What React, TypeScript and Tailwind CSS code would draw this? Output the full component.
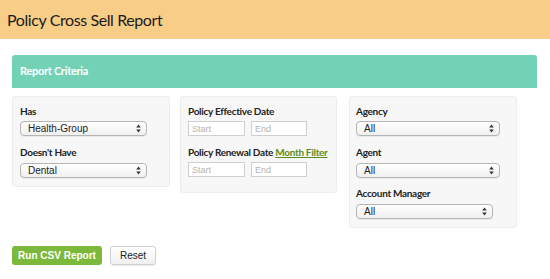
import React from "react";

const labelCls =
   "block whitespace-nowrap text-[10px] leading-[14px] tracking-[-0.3px] font-bold text-[#222] font-['Lato','Noto_Sans',sans-serif]";

const SelectBox = ({ value, width }: { value: string; width: string }) => (
   <div
      className={`relative flex h-[15px] items-center rounded-[4px] border border-[#b5b5b5] bg-gradient-to-b from-white to-[#f0f0f0] pl-[7px] shadow-[0_1px_0_rgba(0,0,0,0.05)] ${width}`}
   >
      <span className="text-[10px] leading-none text-[#222] font-['Liberation_Sans',Arial,sans-serif]">
         {value}
      </span>
      <svg
         className="pointer-events-none absolute right-[5px] top-[2px]"
         width="5"
         height="9"
         viewBox="0 0 5 9"
      >
         <path d="M2.5 0.5 L4.8 3.6 H0.2 Z" fill="#333" />
         <path d="M2.5 8.5 L4.8 5.4 H0.2 Z" fill="#333" />
      </svg>
   </div>
);

const DateInput = ({ placeholder, width }: { placeholder: string; width: string }) => (
   <input
      placeholder={placeholder}
      className={`h-[15px] ${width} border border-[#cfcfcf] bg-white px-[3px] text-[9px] text-[#333] placeholder:text-[#b3b3b3] font-['Liberation_Sans',Arial,sans-serif] outline-none`}
   />
);

export default function App() {
   return (
      <div className="min-h-[279px] w-[550px] bg-white">
         {/* Page header */}
         <div className="flex h-[39px] items-center bg-[#f8cd87] px-[7px]">
            <h1 className="text-[16px] leading-none tracking-[-0.4px] text-[#1a1a1a] font-['Lato','Noto_Sans',sans-serif]">
               Policy Cross Sell Report
            </h1>
         </div>

         <div className="ml-[12px] w-[525px] pt-[16px]">
            {/* Criteria bar */}
            <div className="flex h-[33px] items-center rounded-t-[3px] bg-[#73d2b6] px-[8px]">
               <span className="text-[11px] font-bold tracking-[-0.3px] text-white font-['Lato','Noto_Sans',sans-serif]">
                  Report Criteria
               </span>
            </div>

            <div className="mt-[8px] flex items-start">
               {/* Has / Doesn't have */}
               <div className="w-[158px] rounded-[3px] border border-[#ededed] bg-[#f7f7f7] px-[7px] pb-[8px] pt-[7px]">
                  <span className={labelCls}>Has</span>
                  <div className="mt-[3px]">
                     <SelectBox value="Health-Group" width="w-[127px]" />
                  </div>
                  <span className={`${labelCls} mt-[9px]`}>Doesn't Have</span>
                  <div className="mt-[4px]">
                     <SelectBox value="Dental" width="w-[127px]" />
                  </div>
               </div>

               {/* Dates */}
               <div className="ml-[10px] w-[157px] rounded-[3px] border border-[#ededed] bg-[#f7f7f7] px-[7px] pb-[15px] pt-[7px]">
                  <span className={labelCls}>Policy Effective Date</span>
                  <div className="mt-[3px] flex gap-[6px]">
                     <DateInput placeholder="Start" width="w-[57px]" />
                     <DateInput placeholder="End" width="w-[56px]" />
                  </div>
                  <span className={`${labelCls} mt-[9px]`}>
                     Policy Renewal Date{" "}
                     <a href="#" className="text-[#5b8c1b] underline">
                        Month Filter
                     </a>
                  </span>
                  <div className="mt-[3px] flex gap-[6px]">
                     <DateInput placeholder="Start" width="w-[57px]" />
                     <DateInput placeholder="End" width="w-[56px]" />
                  </div>
               </div>

               {/* Agency / agent / manager */}
               <div className="ml-[12px] w-[168px] rounded-[3px] border border-[#ededed] bg-[#f7f7f7] px-[6px] pb-[8px] pt-[7px]">
                  <span className={labelCls}>Agency</span>
                  <div className="mt-[3px]">
                     <SelectBox value="All" width="w-[144px]" />
                  </div>
                  <span className={`${labelCls} mt-[9px]`}>Agent</span>
                  <div className="mt-[4px]">
                     <SelectBox value="All" width="w-[144px]" />
                  </div>
                  <span className={`${labelCls} mt-[8px]`}>Account Manager</span>
                  <div className="mt-[4px]">
                     <SelectBox value="All" width="w-[137px]" />
                  </div>
               </div>
            </div>

            {/* Actions */}
            <div className="mt-[18px] flex gap-[8px]">
               <button className="h-[19px] w-[90px] rounded-[3px] bg-[#7cb93b] text-[10px] font-bold text-white font-['Liberation_Sans',Arial,sans-serif]">
                  Run CSV Report
               </button>
               <button className="h-[19px] w-[46px] rounded-[3px] border border-[#d0d0d0] bg-gradient-to-b from-white to-[#f0f0f0] text-[10px] text-[#222] font-['Liberation_Sans',Arial,sans-serif] shadow-[0_1px_1px_rgba(0,0,0,0.08)]">
                  Reset
               </button>
            </div>
         </div>
      </div>
   );
}
